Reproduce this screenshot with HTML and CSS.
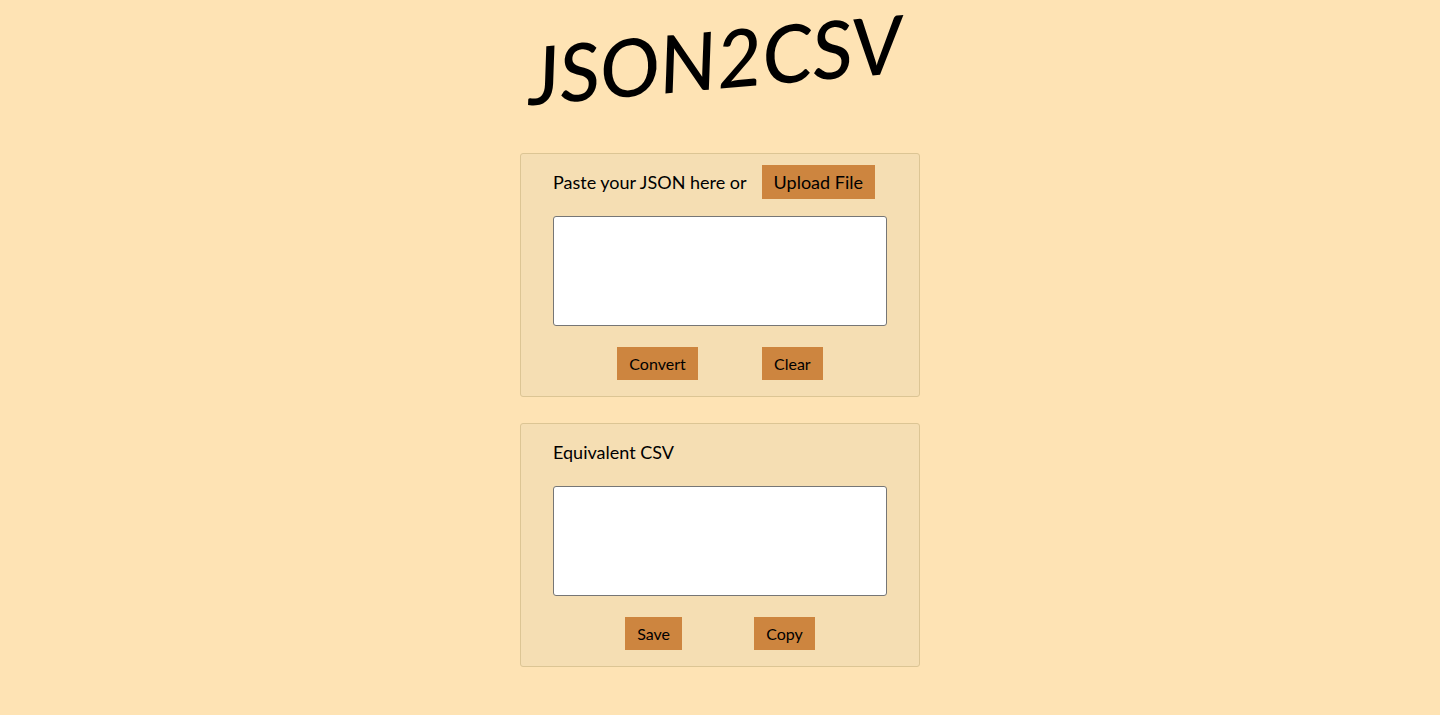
FILE: index.html
```html
<!DOCTYPE html>
<html lang="en">
<head>
<meta charset="utf-8">
<meta name="viewport" content="width=device-width, initial-scale=1">
<title>JSON2CSV</title>
<link rel="stylesheet" href="styles.css">
</head>
<body>
<header class="masthead"><h1 class="wordmark">JSON2CSV</h1></header>
<main class="panels">
  <section class="panel">
    <div class="panel-head">
      <label for="json">Paste your JSON here or</label>
      <button class="btn btn-large" type="button">Upload File</button>
    </div>
    <textarea class="field" id="json"></textarea>
    <div class="actions">
      <button class="btn" type="button">Convert</button>
      <button class="btn" type="button">Clear</button>
    </div>
  </section>
  <section class="panel">
    <div class="panel-head">
      <label for="csv">Equivalent CSV</label>
    </div>
    <textarea class="field" id="csv"></textarea>
    <div class="actions">
      <button class="btn" type="button">Save</button>
      <button class="btn" type="button">Copy</button>
    </div>
  </section>
</main>
</body>
</html>
```

FILE: styles.css
```css
* {
  box-sizing: border-box;
}

body {
  margin: 0;
  padding: 0 16px 48px;
  background: #fee3b4;
  color: #000;
  font-family: Lato, "Open Sans", sans-serif;
  font-size: 18px;
  line-height: 24px;
}

.masthead {
  display: flex;
  justify-content: center;
  padding: 8px 12px 45px 0;
}

.wordmark {
  margin: 0;
  font-size: 80px;
  font-style: italic;
  font-weight: 500;
  line-height: 100px;
  transform: rotate(-5deg);
}

.panels {
  display: grid;
  gap: 26px;
  max-width: 400px;
  margin: 0 auto;
}

.panel {
  padding: 11px 32px 16px;
  border: 1px solid #dcc594;
  border-radius: 3px;
  background: #f5deb3;
}

.panel-head {
  display: flex;
  flex-wrap: wrap;
  align-items: center;
  gap: 15px;
  min-height: 34px;
  margin-bottom: 17px;
}

.field {
  display: block;
  width: 100%;
  height: 110px;
  padding: 4px;
  border: 1px solid #767676;
  border-radius: 3px;
  background: #fff;
  font: inherit;
  resize: none;
}

.actions {
  display: flex;
  justify-content: space-evenly;
  margin-top: 21px;
}

.btn {
  height: 33px;
  padding: 0 12px;
  border: 0;
  background: #cd853f;
  color: #000;
  font: inherit;
  font-size: 16px;
  white-space: nowrap;
}

.btn-large {
  height: 34px;
  font-size: 18px;
}
```
